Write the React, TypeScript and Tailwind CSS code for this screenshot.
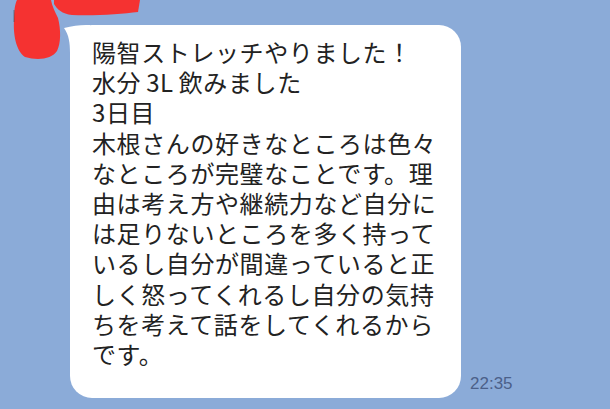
import React from "react";

const lines: React.ReactNode[] = [
  "陽智ストレッチやりました！",
  <>
    水分<span className="mx-[5px]">3L</span>飲みました
  </>,
  "3日目",
  "木根さんの好きなところは色々",
  "なところが完璧なことです。理",
  "由は考え方や継続力など自分に",
  "は足りないところを多く持って",
  "いるし自分が間違っていると正",
  "しく怒ってくれるし自分の気持",
  "ちを考えて話をしてくれるから",
  "です。",
];

export default function App() {
  return (
    <div className="relative w-[610px] h-[409px] overflow-hidden bg-[#8babd8]">
      <svg
        className="absolute left-0 top-0"
        width="150"
        height="65"
        viewBox="0 0 150 65"
      >
        <path
          d="M17 0 L51 0 C52 6 55 12 58 18 C61 30 61 43 57 51 C52 59 38 61 25 57 C16 51 13 34 14 20 C14 10 15 4 17 0 Z"
          fill="#f53231"
        />
        <path
          d="M54 0 L140 0 L138 12 C122 14 95 16 72 15 C62 14 57 9 54 4 Z"
          fill="#f53231"
        />
        <path d="M14 10 L14 22" stroke="#3a3a3a" strokeWidth="1" opacity="0.5" />
      </svg>

      <div className="flex items-end pl-[70px] pt-[25px]">
        <div className="relative w-[391px] h-[373px] rounded-[22px] bg-white pl-[22px] pt-[12px]">
          <svg
            className="absolute left-[-6px] top-0"
            width="26"
            height="28"
            viewBox="0 0 26 28"
          >
            <path
              d="M0 3 C8 1 15 0 22 0 L26 0 L26 28 L6 28 C6 18 5 10 0 3 Z"
              fill="#ffffff"
            />
          </svg>
          <div
            className="relative text-[24px] leading-[30.2px] tracking-[0.6px] text-[#222222] whitespace-nowrap"
            style={{ fontFamily: '"Noto Sans CJK JP", "Noto Sans", sans-serif' }}
          >
            {lines.map((l, i) => (
              <div key={i} className="h-[30.2px]">
                {l}
              </div>
            ))}
          </div>
        </div>
        <div
          className="ml-[9px] mb-[4px] text-[17px] leading-[20px] text-[#4b6089]"
          style={{ fontFamily: '"Liberation Sans", Arial, sans-serif' }}
        >
          22:35
        </div>
      </div>
    </div>
  );
}
